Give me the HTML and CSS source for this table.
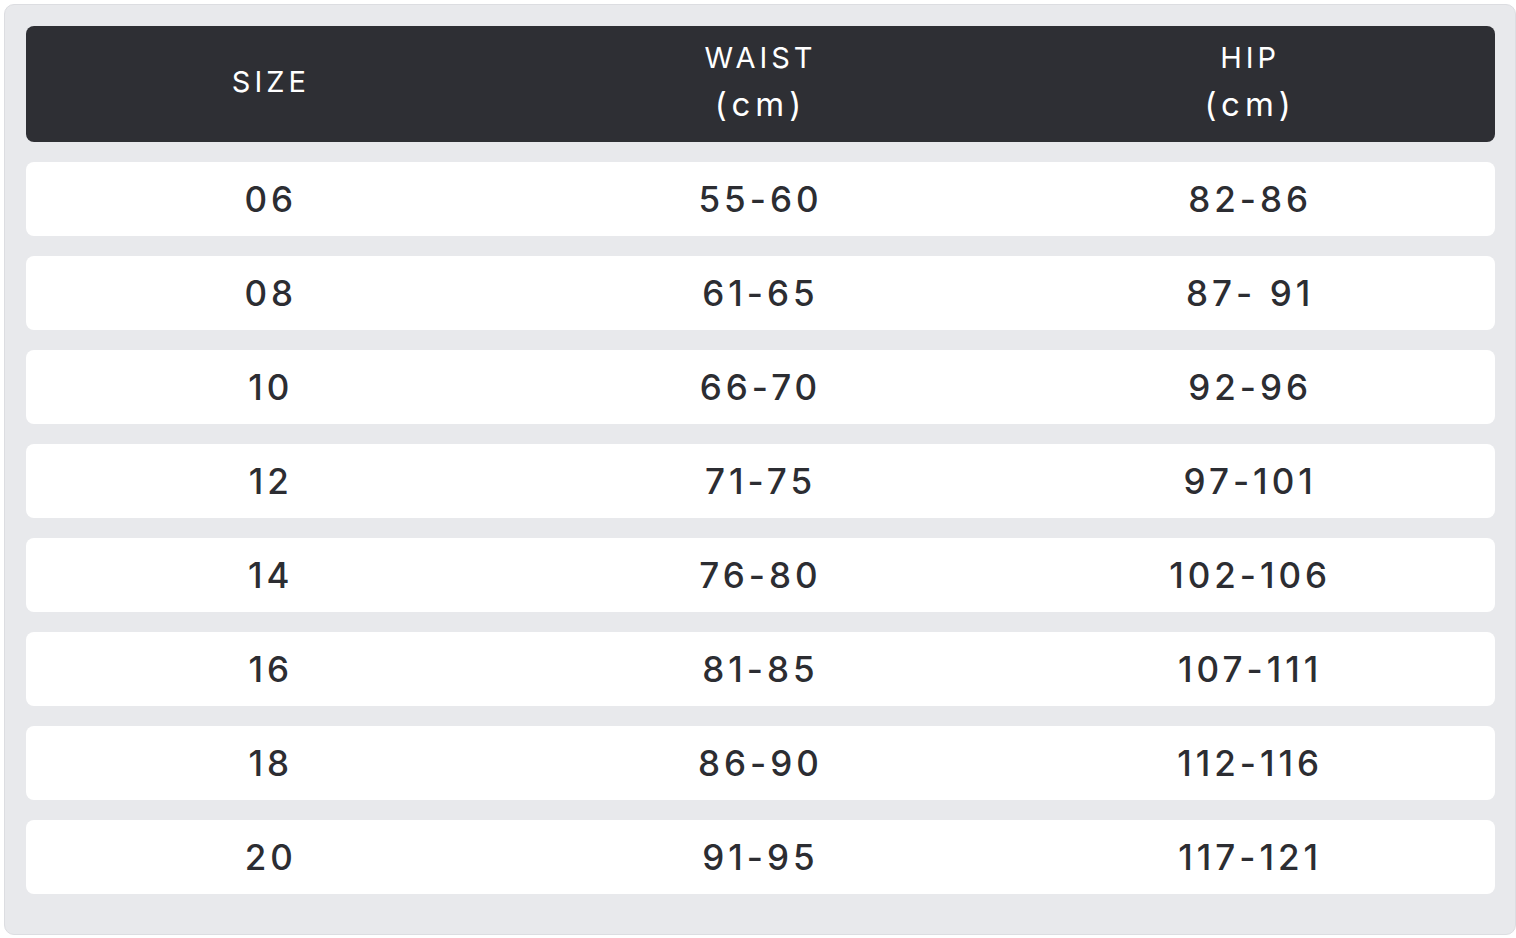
FILE: index.html
```html
<!DOCTYPE html>
<html>
<head>
<meta charset="utf-8">
<link rel="stylesheet" href="styles.css">
</head>
<body>
<div class="chart">
  <div class="row head">
    <div class="cell"><div class="label">SIZE</div></div>
    <div class="cell"><div class="label">WAIST<br><span class="unit">(cm)</span></div></div>
    <div class="cell"><div class="label">HIP<br><span class="unit">(cm)</span></div></div>
  </div>
  <div class="row"><div class="cell">06</div><div class="cell">55-60</div><div class="cell">82-86</div></div>
  <div class="row"><div class="cell">08</div><div class="cell">61-65</div><div class="cell">87- 91</div></div>
  <div class="row"><div class="cell">10</div><div class="cell">66-70</div><div class="cell">92-96</div></div>
  <div class="row"><div class="cell">12</div><div class="cell">71-75</div><div class="cell">97-101</div></div>
  <div class="row"><div class="cell">14</div><div class="cell">76-80</div><div class="cell">102-106</div></div>
  <div class="row"><div class="cell">16</div><div class="cell">81-85</div><div class="cell">107-111</div></div>
  <div class="row"><div class="cell">18</div><div class="cell">86-90</div><div class="cell">112-116</div></div>
  <div class="row"><div class="cell">20</div><div class="cell">91-95</div><div class="cell">117-121</div></div>
</div>
</body>
</html>
```
FILE: styles.css
```css
html, body {
  margin: 0;
  padding: 0;
  background: #ffffff;
}
body {
  padding: 4px 0 0 4px;
  font-family: "Inter", "Liberation Sans", sans-serif;
}
.chart {
  width: 1469px;
  padding: 21px 20px 40px 21px;
  background: #e8e9ec;
  border: 1px solid #dcdde1;
  border-radius: 10px;
  display: flex;
  flex-direction: column;
  gap: 20px;
}
.row {
  display: grid;
  grid-template-columns: 1fr 1fr 1fr;
  height: 74px;
  flex: none;
  background: #ffffff;
  border-radius: 8px;
  color: #2c2d32;
  font-size: 35px;
  font-weight: 500;
  letter-spacing: 4px;
}
.cell {
  display: flex;
  align-items: center;
  justify-content: center;
  text-align: center;
}
.row.head {
  height: 116px;
  box-sizing: border-box;
  padding-bottom: 6px;
  background: #2e2f34;
  color: #ffffff;
  font-size: 29px;
  font-weight: 400;
  letter-spacing: 4px;
  line-height: 47px;
}
.label {
  text-align: center;
}
.unit {
  font-size: 33px;
  letter-spacing: 5px;
}
```
